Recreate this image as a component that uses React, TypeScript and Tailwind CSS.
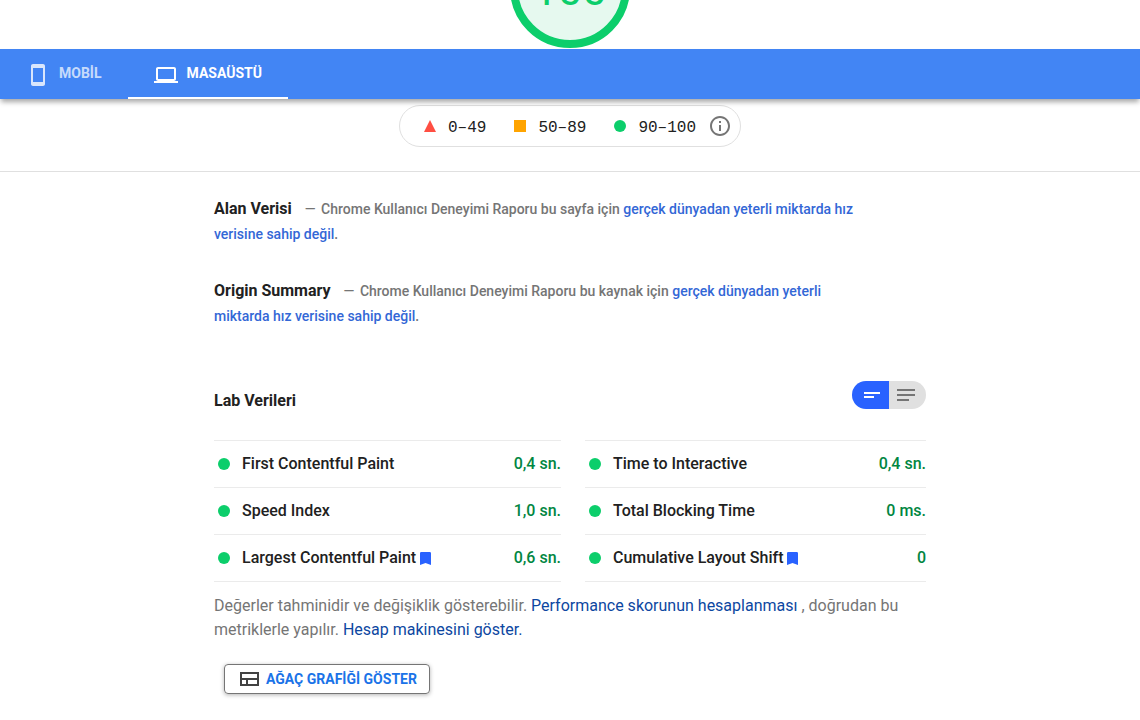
import type { ReactNode } from "react";

type Metric = { name: string; value: string; bookmarked?: boolean };

const leftMetrics: Metric[] = [
  { name: "First Contentful Paint", value: "0,4 sn." },
  { name: "Speed Index", value: "1,0 sn." },
  { name: "Largest Contentful Paint", value: "0,6 sn.", bookmarked: true },
];

const rightMetrics: Metric[] = [
  { name: "Time to Interactive", value: "0,4 sn." },
  { name: "Total Blocking Time", value: "0 ms." },
  { name: "Cumulative Layout Shift", value: "0", bookmarked: true },
];

const tabs = [
  {
    label: "MOBİL",
    active: false,
    path: "M17 1.01L7 1c-1.1 0-2 .9-2 2v18c0 1.1.9 2 2 2h10c1.1 0 2-.9 2-2V3c0-1.1-.9-1.99-2-1.99zM17 19H7V5h10v14z",
  },
  {
    label: "MASAÜSTÜ",
    active: true,
    path: "M20 18c1.1 0 1.99-.9 1.99-2L22 6c0-1.1-.9-2-2-2H4c-1.1 0-2 .9-2 2v10c0 1.1.9 2 2 2H0v2h24v-2h-4zM4 6h16v10H4V6z",
  },
];

function Icon({ path, className }: { path: string; className?: string }) {
  return (
    <svg viewBox="0 0 24 24" className={`size-6 shrink-0 ${className ?? ""}`} fill="currentColor" aria-hidden="true">
      <path d={path} />
    </svg>
  );
}

function Gauge({ score }: { score: number }) {
  return (
    <div className="flex h-[49px] items-end justify-center overflow-hidden pb-px">
      <div className="flex size-[120px] shrink-0 items-center justify-center rounded-full border-8 border-[#0cce6b] bg-[#e6f9ef]">
        <span className="pt-1 text-[44px] leading-none text-[#0cce6b]">{score}</span>
      </div>
    </div>
  );
}

function TabBar() {
  return (
    <nav role="tablist" className="relative flex h-[50px] bg-[#4285f4] shadow-[0_4px_5px_-1px_rgba(0,0,0,0.35)]">
      {tabs.map((tab) => (
        <button
          key={tab.label}
          type="button"
          role="tab"
          aria-selected={tab.active}
          className={`flex items-center gap-[9px] border-b-2 px-[26px] text-sm font-bold text-white ${
            tab.active ? "border-white" : "border-transparent"
          }`}
        >
          <Icon path={tab.path} className={tab.active ? "mt-1" : "mt-1 opacity-80"} />
          <span className={tab.active ? "" : "opacity-70"}>{tab.label}</span>
        </button>
      ))}
    </nav>
  );
}

function Legend() {
  return (
    <div className="flex justify-center border-b border-[#e0e0e0] pt-1.5 pb-6">
      <div className="flex h-[42px] items-center gap-7 rounded-full border border-[#e0e0e0] pr-2 pl-6 font-['Liberation_Mono',monospace] text-base text-[#212121]">
        <div className="flex items-center gap-3">
          <svg viewBox="0 0 12 12" className="size-3" fill="#ff4e42" aria-hidden="true">
            <path d="M6 0l6 12H0z" />
          </svg>
          <span className="pt-1">0–49</span>
        </div>
        <div className="flex items-center gap-3">
          <span className="size-3 bg-[#ffa400]" />
          <span className="pt-1">50–89</span>
        </div>
        <div className="flex items-center gap-3">
          <span className="size-3 rounded-full bg-[#0cce6b]" />
          <span className="pt-1">90–100</span>
          <button type="button" aria-label="Bilgi" className="text-[#757575]">
            <Icon path="M11 17h2v-6h-2v6zm1-15C6.48 2 2 6.48 2 12s4.48 10 10 10 10-4.48 10-10S17.52 2 12 2zm0 18c-4.41 0-8-3.59-8-8s3.59-8 8-8 8 3.59 8 8-3.59 8-8 8zM11 9h2V7h-2v2z" />
          </button>
        </div>
      </div>
    </div>
  );
}

function FieldSummary({ title, children }: { title: string; children: ReactNode }) {
  return (
    <div className="max-w-[656px] text-sm leading-[25px] font-medium text-[#757575]">
      <h2 className="mr-[13px] inline text-base leading-[25px] font-bold text-[#212121]">{title}</h2>
      <span className="mr-0.5">—</span> {children}
    </div>
  );
}

function MetricList({ metrics }: { metrics: Metric[] }) {
  return (
    <dl className="border-t border-[#ebebeb]">
      {metrics.map((m) => (
        <div key={m.name} className="flex h-[47px] items-center border-b border-[#ebebeb] pl-1 text-base font-medium">
          <span className="mr-3 size-3 rounded-full bg-[#0cce6b]" />
          <dt className="flex items-center text-[#212121]">
            {m.name}
            {m.bookmarked && (
              <svg viewBox="0 0 11 13" className="ml-1 h-[13px] w-[11px]" fill="#2962ff" aria-hidden="true">
                <path d="M1.2 0h8.6Q11 0 11 1.2V13L5.5 11 0 13V1.2Q0 0 1.2 0z" />
              </svg>
            )}
          </dt>
          <dd className="ml-auto text-[#018642]">{m.value}</dd>
        </div>
      ))}
    </dl>
  );
}

function ViewToggle() {
  return (
    <div className="flex h-7 overflow-hidden rounded-full">
      <button type="button" aria-label="Özet görünüm" aria-pressed="true" className="flex w-[37px] items-center justify-center bg-[#2962ff] pl-[3px] text-white">
        <svg viewBox="0 0 16 6" className="h-1.5 w-4" fill="currentColor" aria-hidden="true">
          <path d="M0 0h16v2H0zM0 4h10v2H0z" />
        </svg>
      </button>
      <button type="button" aria-label="Ayrıntılı görünüm" aria-pressed="false" className="flex w-[37px] items-center justify-center bg-[#e0e0e0] pr-[3px] text-[#757575]">
        <svg viewBox="0 0 18 12" className="h-3 w-[18px]" fill="currentColor" aria-hidden="true">
          <path d="M0 0h18v2H0zM0 5h18v2H0zM0 10h12v2H0z" />
        </svg>
      </button>
    </div>
  );
}

export default function App() {
  return (
    <div className="min-h-screen bg-white font-['Roboto',sans-serif]">
      <Gauge score={100} />
      <TabBar />
      <Legend />

      <main className="mx-auto max-w-[712px] pt-6 pb-6">
        <div className="flex flex-col gap-[31px]">
          <FieldSummary title="Alan Verisi">
            Chrome Kullanıcı Deneyimi Raporu bu sayfa için{" "}
            <a href="#crux" className="text-[#3367d6]">gerçek dünyadan yeterli miktarda hız verisine sahip değil</a>.
          </FieldSummary>
          <FieldSummary title="Origin Summary">
            Chrome Kullanıcı Deneyimi Raporu bu kaynak için{" "}
            <a href="#crux" className="text-[#3367d6]">gerçek dünyadan yeterli miktarda hız verisine sahip değil</a>.
          </FieldSummary>
        </div>

        <div className="mt-[52px] flex items-start justify-between">
          <h2 className="pt-2 text-base font-bold text-[#212121]">Lab Verileri</h2>
          <ViewToggle />
        </div>

        <div className="mt-[27px] grid grid-cols-[347fr_341fr] gap-6">
          <MetricList metrics={leftMetrics} />
          <MetricList metrics={rightMetrics} />
        </div>

        <p className="mt-3 text-base text-[#757575]">
          Değerler tahminidir ve değişiklik gösterebilir.{" "}
          <a href="#scoring" className="text-[#0d47a1]">Performance skorunun hesaplanması</a> , doğrudan bu metriklerle yapılır.{" "}
          <a href="#calculator" className="text-[#0d47a1]">Hesap makinesini göster.</a>
        </p>

        <button
          type="button"
          className="mt-[22px] ml-2.5 flex h-[30px] items-center gap-[5px] rounded border border-[#757575] px-3 text-sm font-bold text-[#1a73e8] shadow-[0_1px_4px_rgba(0,0,0,0.3)]"
        >
          <Icon path="M3 5v14h19V5H3zm2 2h15v4H5V7zm0 10v-4h4v4H5zm6 0v-4h9v4h-9z" className="text-[#424242]" />
          AĞAÇ GRAFİĞİ GÖSTER
        </button>
      </main>
    </div>
  );
}
